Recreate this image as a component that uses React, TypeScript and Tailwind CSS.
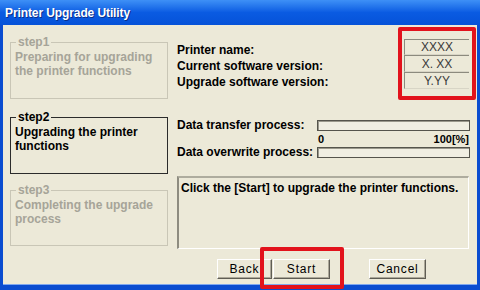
import React from 'react';

const StepBox = ({ label, lines, active, className }: { label: string; lines: string[]; active?: boolean; className?: string }) => (
  <fieldset className={`w-[158px] border ${active ? 'border-[#2b2b2b]' : 'border-[#c9c6b6]'} ${className ?? ''}`}>
    <legend className={`ml-[5px] px-[2px] text-[12px] leading-[14px] font-bold ${active ? 'text-black' : 'text-[#a6a498]'}`}>{label}</legend>
    <div className={`pl-[4px] pt-[1px] text-[12px] leading-[14px] font-bold ${active ? 'text-black' : 'text-[#a6a498]'}`}>
      {lines.map(l => <div key={l}>{l}</div>)}
    </div>
  </fieldset>
);

const Btn = ({ children, className }: { children: React.ReactNode; className?: string }) => (
  <button className={`h-[20px] bg-[#ece9d8] border border-t-white border-l-white border-r-[#5f5d54] border-b-[#5f5d54] shadow-[inset_-1px_-1px_0_#aca899] text-[12px] tracking-[0.8px] text-black ${className ?? ''}`}>
    {children}
  </button>
);

const Field = ({ value, className }: { value: string; className?: string }) => (
  <div className={`flex items-center justify-center border-t border-l border-t-[#8c8a7e] border-l-[#8c8a7e] border-b border-b-[#d8d5c6] text-[12px] text-[#3a3a3a] ${className ?? ''}`}>{value}</div>
);

const Bar = () => (
  <div className="flex-1 h-[11px] bg-[#f0eee2] border border-[#55544c] shadow-[inset_1px_1px_0_#9a988c]" />
);

export default function App() {
  return (
    <div className="relative w-[480px] h-[290px] overflow-hidden flex flex-col font-['Liberation_Sans',Arial,sans-serif]">
      <div className="h-[25px] shrink-0 flex items-center pl-[5px] bg-linear-to-b from-[#3e90f6] via-[#0a5be2] to-[#0652d8]">
        <span className="text-white font-bold text-[12px] tracking-[-0.1px] [text-shadow:1px_1px_0_#0a2f8a]">Printer Upgrade Utility</span>
      </div>

      <div className="flex-1 flex bg-[#ece9d8] border-l-[3px] border-r-[3px] border-b-[5px] border-[#0a4cd0] shadow-[inset_0_-1px_0_#7fa7ee]">
        {/* step list */}
        <div className="pl-[7px] pt-[10px] flex flex-col">
          <StepBox label="step1" lines={['Preparing for upgrading', 'the printer functions']} className="h-[64px]" />
          <StepBox label="step2" lines={['Upgrading the printer', 'functions']} active className="h-[64px] mt-[11px]" />
          <StepBox label="step3" lines={['Completing the upgrade', 'process']} className="h-[63px] mt-[9px]" />
        </div>

        {/* details */}
        <div className="ml-[9px] w-[293px] flex flex-col text-[12px] text-black">
          <div className="flex mt-[14px]">
            <div className="flex-1 pt-[3px] font-bold leading-[16px]">
              <div>Printer name:</div>
              <div>Current software version:</div>
              <div>Upgrade software version:</div>
            </div>
            <div className="w-[65px] mr-[1px] flex flex-col">
              <Field value="XXXX" className="h-[16px]" />
              <Field value="X. XX" className="h-[17px]" />
              <Field value="Y.YY" className="h-[17px]" />
            </div>
          </div>

          <div className="mt-[30px] flex items-center">
            <span className="w-[140px] font-bold leading-[11px]">Data transfer process:</span>
            <Bar />
          </div>
          <div className="flex justify-between pl-[141px] pr-[1px] h-[16px] items-center text-[11px] font-bold leading-[11px]">
            <span>0</span>
            <span>100[%]</span>
          </div>
          <div className="flex items-center">
            <span className="w-[140px] font-bold leading-[11px]">Data overwrite process:</span>
            <Bar />
          </div>

          <div className="mt-[18px] h-[73px] mr-[1px] border-t-2 border-l-2 border-t-[#aeac9e] border-l-[#8e8c80] border-b border-r border-b-white border-r-white pl-[2px] pt-[3px] font-bold leading-[14px]">
            Click the [Start] to upgrade the printer functions.
          </div>

          <div className="mt-[10px] flex pl-[40px]">
            <Btn className="w-[55px]">Back</Btn>
            <Btn className="w-[57px] ml-[1px]">Start</Btn>
            <Btn className="w-[57px] ml-[39px]">Cancel</Btn>
          </div>
        </div>
      </div>

      {/* red annotation frames */}
      <div className="absolute left-[398px] top-[27px] w-[78px] h-[73px] border-[4px] border-[#e2121c] rounded-[2px]" />
      <div className="absolute left-[260px] top-[247px] w-[84px] h-[42px] border-[4px] border-[#e2121c] rounded-[2px]" />
    </div>
  );
}
